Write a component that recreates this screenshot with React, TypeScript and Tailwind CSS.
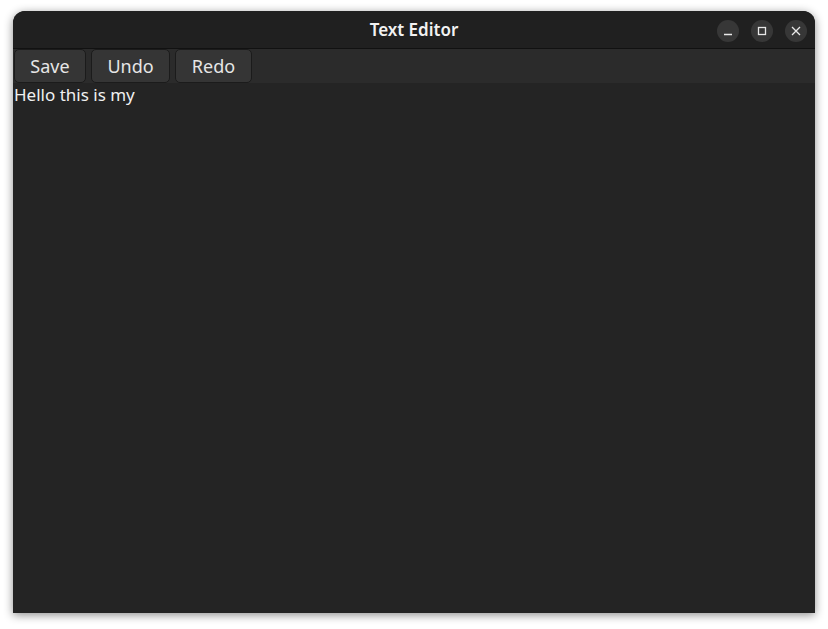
import React from 'react';

const WinButton: React.FC<{ children: React.ReactNode }> = ({ children }) => (
  <div className="w-[22px] h-[22px] rounded-full bg-[#373737] flex items-center justify-center text-[#e8e8e8]">
    {children}
  </div>
);

const ToolButton: React.FC<{ label: string; w: string }> = ({ label, w }) => (
  <button
    className={`${w} h-[34px] rounded-[5px] bg-[#353535] border border-[#1b1b1b] text-[18px] text-[#e6e6e6] flex items-center justify-center`}
  >
    {label}
  </button>
);

export default function App() {
  return (
    <div className="w-[828px] h-[629px] bg-white pl-[13px] pt-[11px]" style={{ fontFamily: '"Noto Sans", "Open Sans", sans-serif' }}>
      <div className="w-[802px] h-[602px] flex flex-col rounded-t-[12px] overflow-hidden bg-[#242424] shadow-[0_2px_10px_rgba(0,0,0,0.45)]">
        <div className="h-[38px] shrink-0 bg-[#202020] border-b border-[#111] relative flex items-center justify-center">
          <span className="text-[17px] font-semibold text-[#f2f2f2]">Text Editor</span>
          <div className="absolute right-[8px] top-[9px] flex gap-[12px]">
            <WinButton>
              <svg width="10" height="10" viewBox="0 0 10 10"><path d="M1 8.5h8" stroke="currentColor" strokeWidth="1.3" /></svg>
            </WinButton>
            <WinButton>
              <svg width="10" height="10" viewBox="0 0 10 10"><rect x="1.5" y="1.5" width="7" height="7" fill="none" stroke="currentColor" strokeWidth="1.3" /></svg>
            </WinButton>
            <WinButton>
              <svg width="10" height="10" viewBox="0 0 10 10"><path d="M1 1l8 8M9 1l-8 8" stroke="currentColor" strokeWidth="1.3" /></svg>
            </WinButton>
          </div>
        </div>
        <div className="h-[34px] shrink-0 bg-[#2b2b2b] flex gap-[5px] pl-[1px]">
          <ToolButton label="Save" w="w-[72px]" />
          <ToolButton label="Undo" w="w-[79px]" />
          <ToolButton label="Redo" w="w-[77px]" />
        </div>
        <div className="flex-1 px-[1px] pt-[1px] text-[17px] leading-[22px] text-[#f0f0f0]">Hello this is my</div>
      </div>
    </div>
  );
}
